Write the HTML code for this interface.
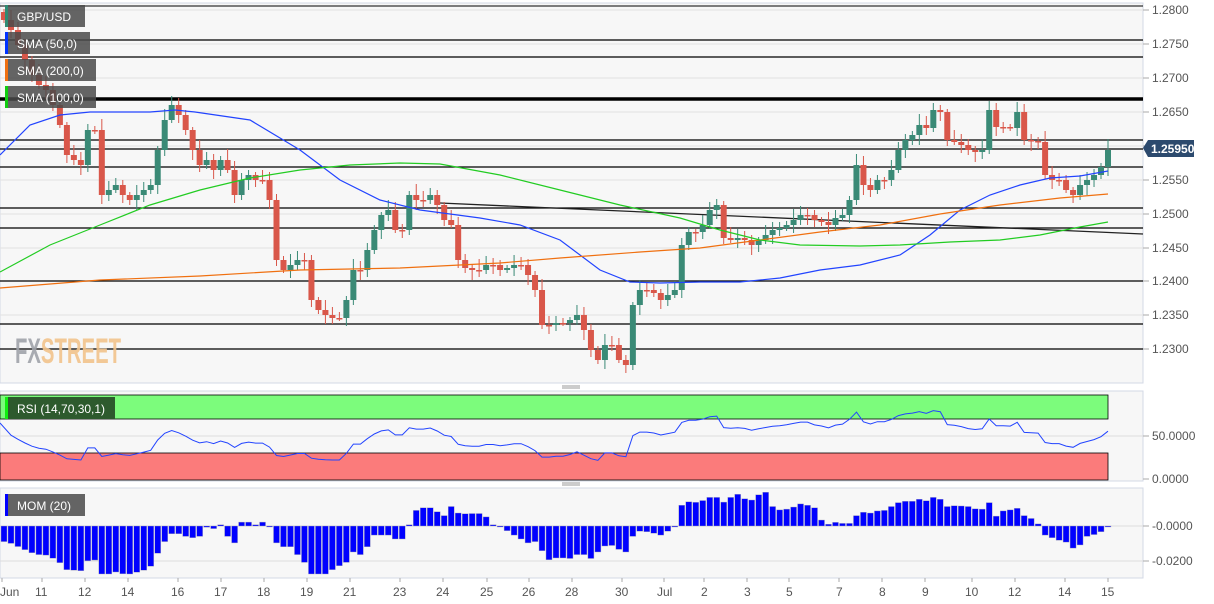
<!DOCTYPE html>
<html><head><meta charset="utf-8"><style>
html,body{margin:0;padding:0;background:#fff;width:1214px;height:604px;overflow:hidden;font-family:"Liberation Sans",sans-serif}
svg text{font-family:"Liberation Sans",sans-serif}
</style></head><body>
<svg id="s" width="1214" height="604" xmlns="http://www.w3.org/2000/svg">
<rect x="0" y="3" width="1143" height="380" fill="#f7f7f7" stroke="#d3d8e6"/>
<rect x="0" y="391" width="1143" height="90" fill="#f7f7f7" stroke="#d3d8e6"/>
<rect x="0" y="488" width="1143" height="90" fill="#f7f7f7" stroke="#d3d8e6"/>
<g id="grid" stroke="#e2e2e2" stroke-width="1"></g>
<g id="axis" font-size="12" fill="#555"></g>
<g id="hl" stroke="#000"></g>
<text x="15" y="363" font-size="35" font-weight="bold" transform="translate(15,0) scale(0.58,1) translate(-15,0)" fill="#a0a3aa" opacity="0.9">FX<tspan fill="#f2c48c">STREET</tspan></text>
<g id="cd"></g>
<g id="ma" fill="none" stroke-width="1.2"></g>
<rect x="0" y="395" width="1108" height="24" fill="#7cfc7c" stroke="#000" stroke-width="0.8"/>
<rect x="0" y="453" width="1108" height="27" fill="#fb7b7b" stroke="#000" stroke-width="0.8"/>
<line x1="0" y1="436" x2="1143" y2="436" stroke="#ddd"/>
<g id="rsi"></g>
<line x1="0" y1="526" x2="1143" y2="526" stroke="#ddd"/>
<line x1="0" y1="561" x2="1143" y2="561" stroke="#ddd"/>
<g id="mom"></g>
<line x1="562" y1="386" x2="580" y2="386" stroke="#999"/><line x1="562" y1="388" x2="580" y2="388" stroke="#999"/>
<line x1="562" y1="483" x2="580" y2="483" stroke="#999"/><line x1="562" y1="485" x2="580" y2="485" stroke="#999"/>
<g font-size="12" fill="#fff">
<rect x="5" y="5" width="80" height="22" fill="#4a4a4a" opacity="0.85"/><rect x="5" y="5" width="3" height="22" fill="#2e8b73"/><text x="17" y="21">GBP/USD</text>
<rect x="5" y="32" width="85" height="22" fill="#4a4a4a" opacity="0.85"/><rect x="5" y="32" width="3" height="22" fill="#0033ff"/><text x="17" y="48">SMA (50,0)</text>
<rect x="5" y="59" width="91" height="22" fill="#4a4a4a" opacity="0.85"/><rect x="5" y="59" width="3" height="22" fill="#f07010"/><text x="17" y="75">SMA (200,0)</text>
<rect x="5" y="86" width="91" height="22" fill="#4a4a4a" opacity="0.85"/><rect x="5" y="86" width="3" height="22" fill="#11cc11"/><text x="17" y="102">SMA (100,0)</text>
<rect x="5" y="397" width="110" height="22" fill="#2d5a2d"/><rect x="5" y="397" width="3" height="22" fill="#11ee11"/><text x="17" y="413">RSI (14,70,30,1)</text>
<rect x="5" y="494" width="80" height="22" fill="#4a4a4a" opacity="0.85"/><rect x="5" y="494" width="3" height="22" fill="#0000ff"/><text x="17" y="510">MOM (20)</text>
</g>
<path d="M1143 148 L1148 140 H1194 V157 H1148 Z" fill="#2c4a6e"/>
<text x="1151" y="153" font-size="12" font-weight="bold" fill="#fff">1.25950</text>
<g id="xl" font-size="12" fill="#555"></g>
</svg>
<script>
var NS="http://www.w3.org/2000/svg";
function el(p,t,a,txt){var e=document.createElementNS(NS,t);for(var k in a)e.setAttribute(k,a[k]);if(txt)e.textContent=txt;document.getElementById(p).appendChild(e);return e;}
var ys=[20,30,45,60,75,85,90,105,125,155,160,165,130,130,195,190,185,195,200,195,190,185,150,120,105,115,130,150,165,160,170,160,170,195,180,175,180,180,200,260,270,265,260,260,300,310,315,318,318,300,270,270,250,230,215,210,230,230,195,200,200,195,205,220,225,260,268,270,270,265,265,270,268,265,265,275,290,325,325,323,323,320,315,330,350,360,345,345,360,365,305,290,290,293,300,295,290,245,232,232,225,210,205,238,240,238,240,245,240,235,230,228,225,220,215,215,220,222,225,218,215,200,165,185,190,180,180,170,150,140,135,125,128,110,112,140,142,145,150,152,150,110,127,127,128,112,140,141,142,175,180,180,190,195,185,180,175,167,150];
var n=ys.length,st=(1108-4)/(n-1);
[10,44,78,112,146,180,214,248,281,315,349].forEach(function(y,i){el('grid','line',{x1:0,y1:y,x2:1143,y2:y});
 el('grid','line',{x1:1143,y1:y,x2:1149,y2:y,stroke:'#aaa'});
 if(y!=146)el('axis','text',{x:1152,y:y+4},(1.28-i*0.005).toFixed(4));});
[[436,'50.0000'],[479,'0.0000'],[526,'-0.0000'],[561,'-0.0200']].forEach(function(a){el('axis','line',{x1:1143,y1:a[0],x2:1149,y2:a[0],stroke:'#aaa'});el('axis','text',{x:1152,y:a[0]+4},a[1]);});
[[6,1],[40,1.3],[57,1.3],[99,3.5],[140,1.3],[149,1.3],[167,1.3],[208,1.3],[228,1.3],[281,1.3],[324,1.3],[349,1.3]].forEach(function(a){el('hl','line',{x1:0,y1:a[0],x2:1143,y2:a[0],'stroke-width':a[1]});});
el('hl','line',{x1:440,y1:203,x2:1143,y2:234,'stroke-width':1.3,stroke:'#222'});
for(var i=0;i<n;i++){var x=4+i*st,o=i?ys[i-1]:ys[0]-8,c=ys[i];var up=c<o;var col=up?'#3a8a76':'#d9574a';
 var t=Math.min(o,c),b=Math.max(o,c);var wt=t-3-((i*7)%9),wb=b+3+((i*5)%8);
 el('cd','line',{x1:x,y1:wt,x2:x,y2:wb,stroke:col,'stroke-width':1});
 el('cd','rect',{x:x-3,y:t,width:6,height:Math.max(b-t,1.5),fill:col});}
function pl(pts,col){el('ma','polyline',{points:pts.map(function(p){return p.join(',')}).join(' '),stroke:col});}
pl([[0,155],[30,125],[60,115],[90,112],[150,112],[175,110],[195,112],[250,120],[300,150],[340,180],[380,200],[420,210],[480,218],[520,225],[560,240],[600,270],[630,282],[660,283],[700,282],[740,282],[780,278],[820,270],[860,265],[900,255],[930,235],[960,210],[990,195],[1020,185],[1050,178],[1080,176],[1108,171]],'#2244ff');
pl([[0,288],[100,280],[200,276],[300,270],[400,268],[500,263],[560,258],[640,252],[700,248],[760,240],[820,232],[880,225],[940,214],[1000,205],[1060,198],[1108,194]],'#f07010');
pl([[0,272],[50,245],[100,225],[150,205],[200,190],[250,178],[300,170],[350,165],[400,163],[440,164],[500,175],[560,190],[620,205],[680,218],[720,230],[760,240],[800,245],[860,246],[900,245],[950,242],[1000,240],[1040,235],[1080,227],[1108,222]],'#22cc22');
var pts=[],ag=6,al=5;
for(var i=1;i<n;i++){var d=ys[i-1]-ys[i];var g=d>0?d:0,l=d<0?-d:0;ag=(ag*13+g)/14;al=(al*13+l)/14;
 var r=100-100/(1+ag/al);var y=436-(r-50)*0.85;pts.push((4+i*st).toFixed(1)+','+y.toFixed(1));}
el('rsi','polyline',{points:'0,423 '+pts.join(' '),fill:'none',stroke:'#2244ff','stroke-width':1});
for(var i=0;i<n;i++){var ref=i>=20?ys[i-20]:ys[0]-(20-i)*3;var h=(ref-ys[i])*0.26;h=Math.max(-48,Math.min(40,h));var x=4+i*st;
 el('mom','rect',{x:x-3,y:h>0?526-h:526,width:6,height:Math.max(Math.abs(h),1),fill:'#0000ff',stroke:'#aab','stroke-width':0.4});}
[['Jun',0],['11',35],['12',78],['14',121],['16',171],['17',214],['18',257],['19',300],['21',343],['23',393],['24',436],['25',480],['26',522],['28',565],['30',615],['Jul',657],['2',701],['3',744],['5',786],['7',836],['8',879],['9',922],['10',965],['12',1008],['14',1058],['15',1101]].forEach(function(a){
 var tx=a[1]+(a[0].length>1?(a[0]=='Jun'?2:7):3);
 el('xl','line',{x1:tx,y1:578,x2:tx,y2:582,stroke:'#aaa'});
 el('xl','text',{x:a[1],y:596},a[0]);});
</script>
</body></html>
